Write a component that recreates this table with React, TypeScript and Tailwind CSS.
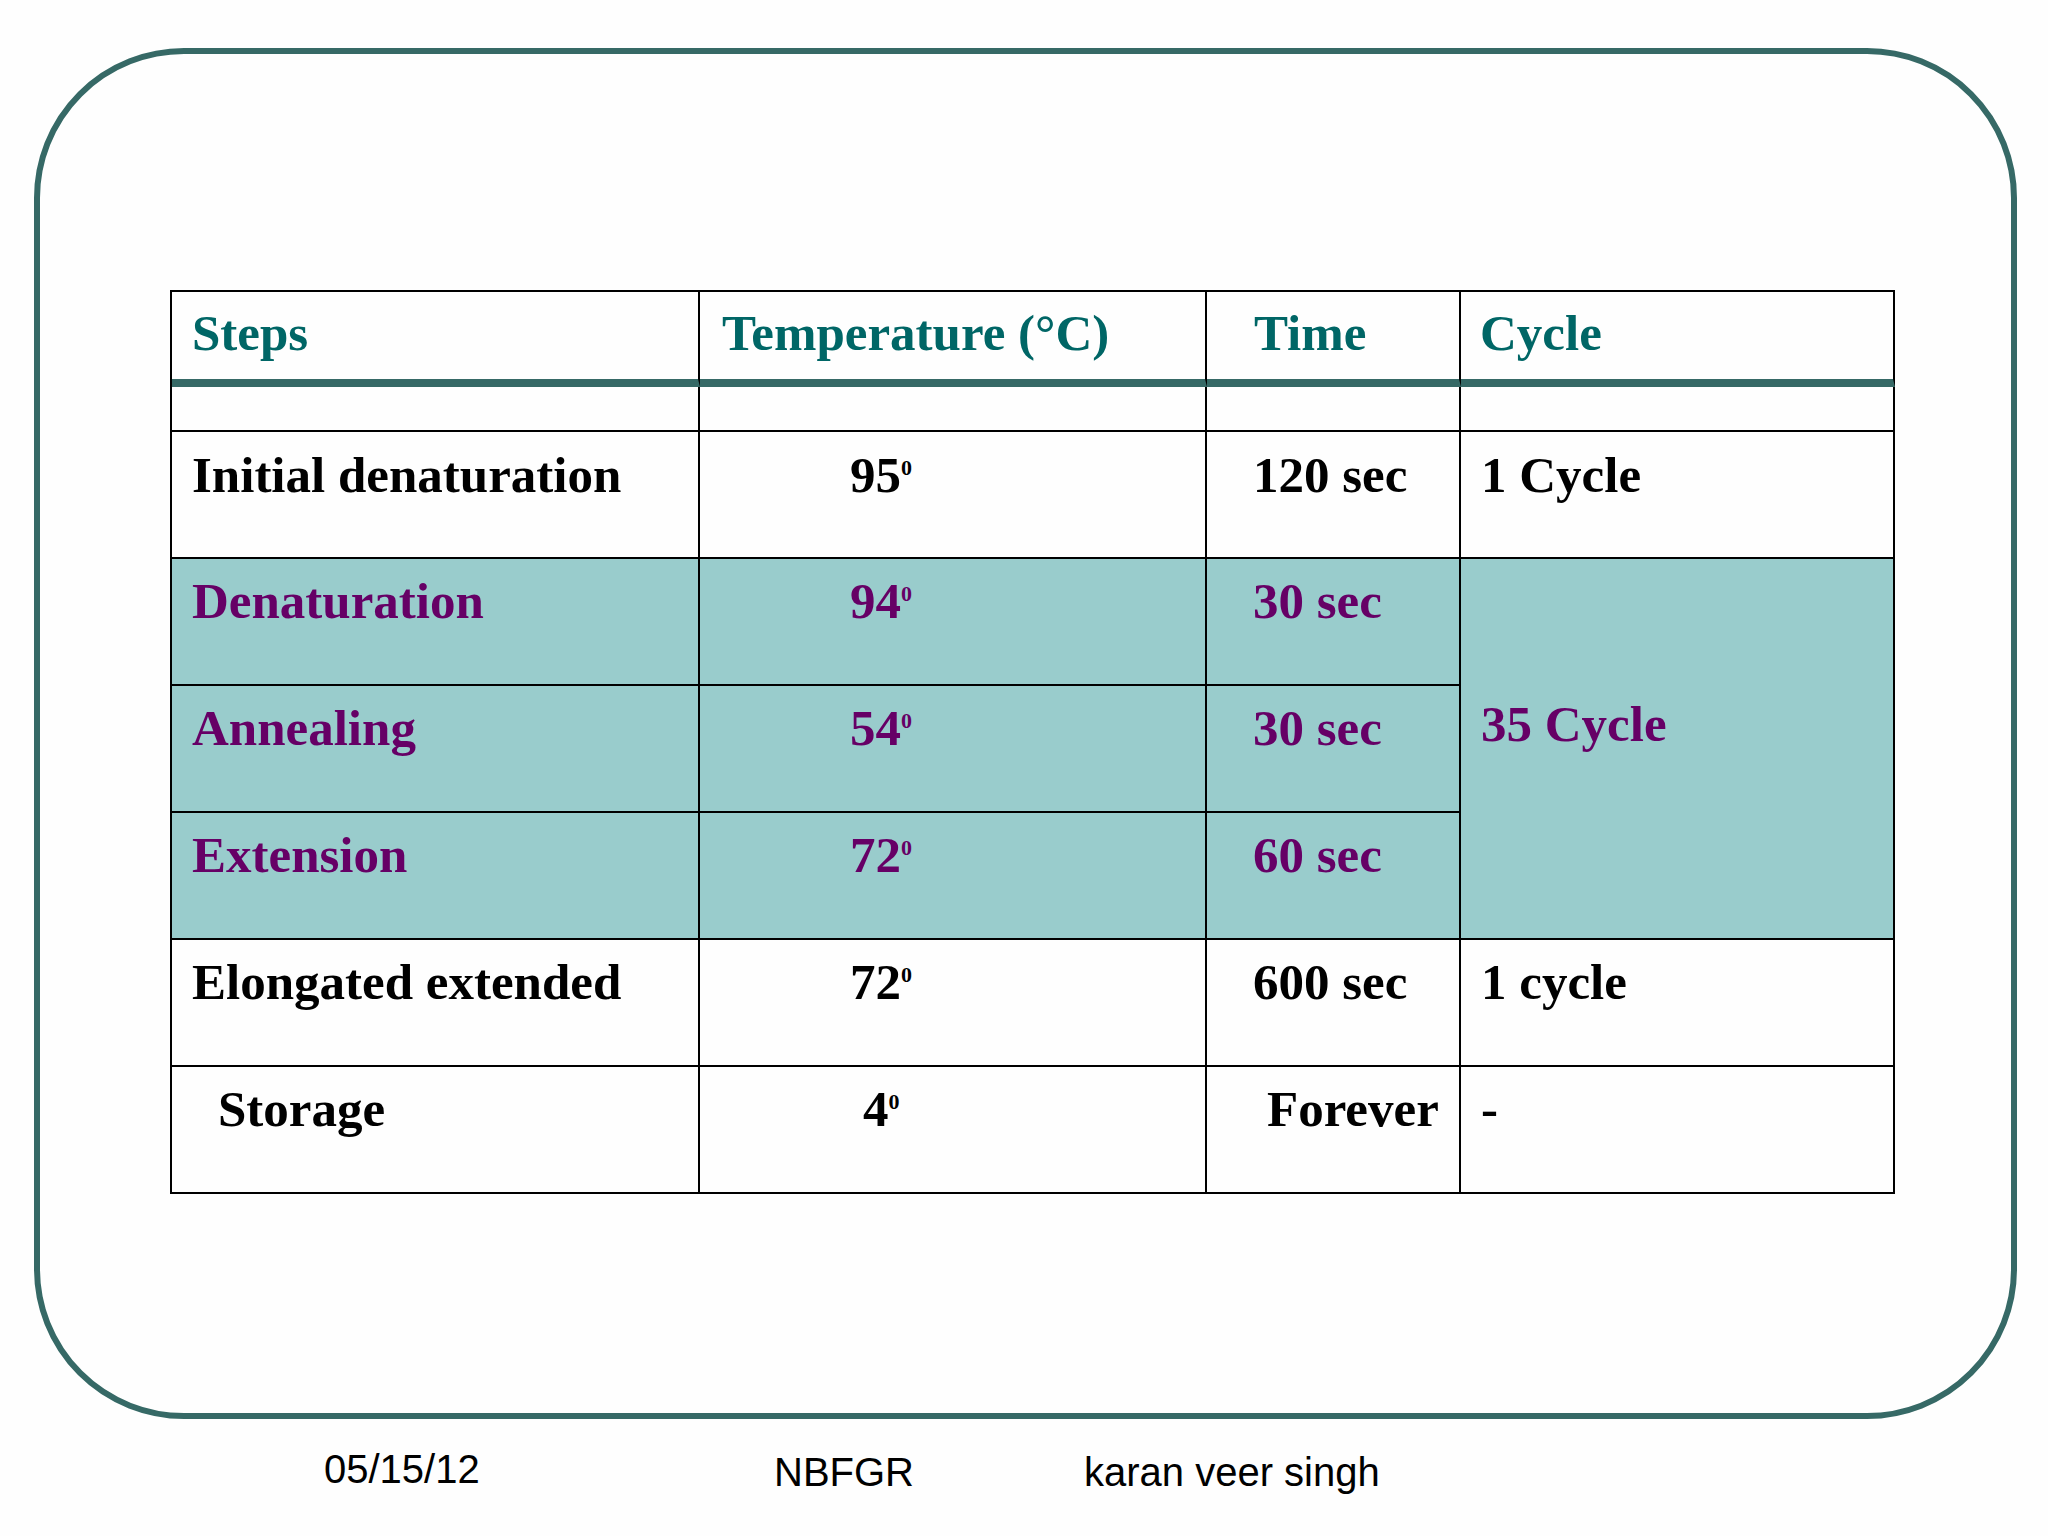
import React from "react";

const base = "border-r-2 border-b-2 border-black";
const head = "border-r-2 border-b-[8px] border-r-black border-b-[#366966] pt-[13px] text-[#006666]";
const teal = "bg-[#99cccc] text-[#660066]";

function Deg({ n }: { n: string }) {
  return (
    <>
      {n}
      <span className="text-[22px] leading-[0] align-[17px]">0</span>
    </>
  );
}

export default function App() {
  return (
    <div className="w-[2048px] h-[1536px] bg-[#fefefe] flex flex-col overflow-hidden">
      <div className="ml-[34px] mt-[48px] w-[1983px] h-[1371px] shrink-0 border-[6px] border-[#366966] rounded-[150px]">
        <div className="ml-[130px] mt-[236px] inline-grid grid-cols-[528px_507px_254px_434px] grid-rows-[95px_45px_127px_127px_127px_127px_127px_127px] border-l-2 border-t-2 border-black font-['Liberation_Serif',serif] font-bold text-[51px] leading-[57px] text-black">
          <div className={`${head} pl-[20px]`}>Steps</div>
          <div className={`${head} pl-[22px]`}>Temperature (°C)</div>
          <div className={`${head} pl-[47px]`}>Time</div>
          <div className={`${head} pl-[19px]`}>Cycle</div>

          <div className={base}></div>
          <div className={base}></div>
          <div className={base}></div>
          <div className={base}></div>

          <div className={`${base} pt-[15px] pl-[20px]`}>Initial denaturation</div>
          <div className={`${base} pt-[15px] pl-[150px]`}><Deg n="95" /></div>
          <div className={`${base} pt-[15px] pl-[46px]`}>120 sec</div>
          <div className={`${base} pt-[15px] pl-[20px]`}>1 Cycle</div>

          <div className={`${base} ${teal} pt-[14px] pl-[20px]`}>Denaturation</div>
          <div className={`${base} ${teal} pt-[14px] pl-[150px]`}><Deg n="94" /></div>
          <div className={`${base} ${teal} pt-[14px] pl-[46px]`}>30 sec</div>
          <div className={`${base} ${teal} row-span-3 pt-[137px] pl-[20px]`}>35 Cycle</div>

          <div className={`${base} ${teal} pt-[14px] pl-[20px]`}>Annealing</div>
          <div className={`${base} ${teal} pt-[14px] pl-[150px]`}><Deg n="54" /></div>
          <div className={`${base} ${teal} pt-[14px] pl-[46px]`}>30 sec</div>

          <div className={`${base} ${teal} pt-[14px] pl-[20px]`}>Extension</div>
          <div className={`${base} ${teal} pt-[14px] pl-[150px]`}><Deg n="72" /></div>
          <div className={`${base} ${teal} pt-[14px] pl-[46px]`}>60 sec</div>

          <div className={`${base} pt-[14px] pl-[20px]`}>Elongated extended</div>
          <div className={`${base} pt-[14px] pl-[150px]`}><Deg n="72" /></div>
          <div className={`${base} pt-[14px] pl-[46px]`}>600 sec</div>
          <div className={`${base} pt-[14px] pl-[20px]`}>1 cycle</div>

          <div className={`${base} pt-[14px] pl-[46px]`}>Storage</div>
          <div className={`${base} pt-[14px] pl-[163px]`}><Deg n="4" /></div>
          <div className={`${base} pt-[14px] pl-[60px]`}>Forever</div>
          <div className={`${base} pt-[14px] pl-[20px]`}>-</div>
        </div>
      </div>

      <div className="mt-[27px] pl-[324px] flex items-start font-['Liberation_Sans',Arial,sans-serif] text-[40px] leading-[46px] text-black">
        <div className="w-[450px]">05/15/12</div>
        <div className="w-[310px] pt-[3px]">NBFGR</div>
        <div className="pt-[3px]">karan veer singh</div>
      </div>
    </div>
  );
}
